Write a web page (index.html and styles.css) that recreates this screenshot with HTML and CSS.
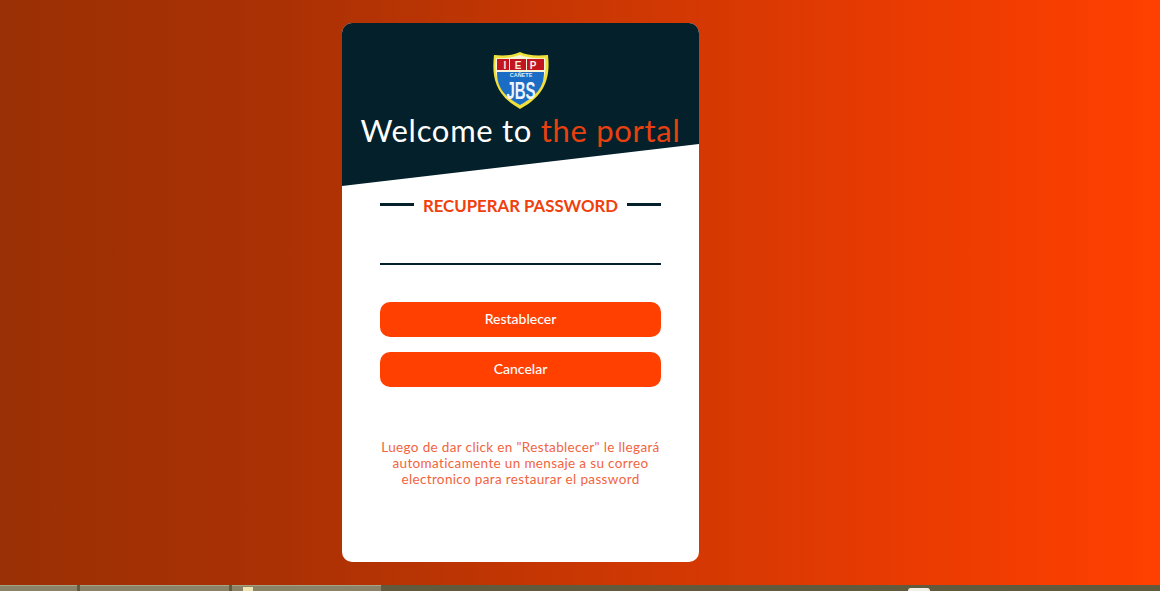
FILE: index.html
```html
<!DOCTYPE html>
<html lang="en">
<head>
  <meta charset="UTF-8" />
  <title>Recuperar Password</title>
  <link rel="stylesheet" href="styles.css">
</head>
<body>
  <main class="page">
    <section class="card">
      <header class="card-head">
        <svg class="logo" viewBox="0 0 56 58" width="56" height="58">
          <path d="M27 0 C33 3 42 4 55 3 C57 22 55 42 27 57 C0 42 -1 22 1 3 C13 4 21 3 27 0 Z" fill="#f2e03a"/>
          <path d="M27 3 C33 5 42 7 52 6 C54 22 51 40 27 53 C4 40 1 22 3 6 C13 7 21 5 27 3 Z" fill="#f7f4d8"/>
          <rect x="4" y="7" width="12" height="11" fill="#c2151f"/>
          <rect x="17" y="7" width="16" height="11" fill="#c2151f"/>
          <rect x="34" y="7" width="17" height="11" fill="#c2151f"/>
          <path d="M4 20 H51 C51 34 45 43 27 53 C9 43 4 34 4 20 Z" fill="#1a6cc4"/>
          <text class="logo-iep" x="27" y="16.500" textLength="33">IEP</text>
          <text class="logo-town" x="28" y="25">CAÑETE</text>
          <text class="logo-jbs" transform="translate(28 47) scale(1 1.55)">JBS</text>
        </svg>
        <h1 class="welcome">Welcome to <span class="accent">the portal</span></h1>
      </header>

      <form class="reset-form">
        <div class="form-title">
          <span class="rule"></span>
          <h2>RECUPERAR PASSWORD</h2>
          <span class="rule"></span>
        </div>
        <input class="email" type="text">
        <button type="button" class="btn first">Restablecer</button>
        <button type="button" class="btn">Cancelar</button>
        <p class="note">Luego de dar click en "Restablecer" le llegará automaticamente un mensaje a su correo electronico para restaurar el password</p>
      </form>
    </section>
  </main>

  <footer class="taskbar">
    <div class="task task-one"></div>
    <div class="task task-two"></div>
    <div class="task task-three"><span class="folder"></span></div>
    <span class="tray-icon"></span>
  </footer>
</body>
</html>
```

FILE: styles.css
```css
* {
  box-sizing: border-box;
}
html, body {
  height: 100%;
}
body {
  margin: 0;
  font-family: Lato, "Noto Sans", sans-serif;
  overflow: hidden;
  display: flex;
  flex-direction: column;
  background: #625a3c;
}
.page {
  height: 585px;
  padding: 23px 119px 0 0;
  display: flex;
  justify-content: center;
  align-items: flex-start;
  background: linear-gradient(to right, #9a3005 0%, #ab3104 25%, #c93703 50%, #e63a02 75%, #ff4000 100%);
}
.card {
  width: 357px;
  height: 539px;
  background: white;
  border-radius: 10px;
  overflow: hidden;
}
.card-head {
  height: 163px;
  padding-top: 29px;
  background: #03202b;
  color: white;
  text-align: center;
  clip-path: polygon(0 0, 100% 0, 100% 121px, 0 100%);
}
.logo {
  display: block;
  margin: 0 auto;
}
.logo text {
  font-family: "Liberation Sans", sans-serif;
  text-anchor: middle;
  font-weight: bold;
}
.logo-iep {
  font-size: 10px;
  fill: #f4efe0;
}
.logo-town {
  font-size: 5.500px;
  font-weight: normal;
  fill: #dfe9f5;
}
.logo-jbs {
  font-size: 15px;
  fill: #eef4fb;
}
.welcome {
  margin: 1px 0 0;
  font-size: 31px;
  font-weight: 400;
  letter-spacing: 0.7px;
  line-height: 38px;
  white-space: nowrap;
}
.accent {
  color: #e8410f;
}
.reset-form {
  padding: 0 38px;
}
.form-title {
  margin-top: 9px;
  height: 20px;
  display: flex;
  align-items: center;
  justify-content: space-between;
}
.form-title h2 {
  margin: 0;
  font-size: 16.800px;
  font-weight: 700;
  color: #f0400c;
  white-space: nowrap;
}
.rule {
  width: 34px;
  height: 3px;
  margin-top: -2px;
  background: #03202b;
}
.email {
  display: block;
  width: 100%;
  height: 40px;
  margin-top: 10px;
  border: none;
  border-bottom: 2px solid #03202b;
  outline: none;
}
.btn {
  display: block;
  width: 100%;
  height: 35px;
  margin-top: 15px;
  border: none;
  border-radius: 10px;
  background: #ff4000;
  color: white;
  font-family: inherit;
  font-size: 14px;
  font-weight: 500;
  padding-bottom: 3px;
}
.btn.first {
  margin-top: 37px;
}
.note {
  margin: 52px -4px 0;
  font-size: 13.500px;
  letter-spacing: 0.35px;
  line-height: 16px;
  text-align: center;
  color: #f2643e;
}
.taskbar {
  flex: 1;
  display: flex;
  gap: 3px;
  position: relative;
}
.task {
  height: 100%;
  background: #8a8368;
  border-top: 1px solid #a8a287;
}
.task-one {
  width: 77px;
}
.task-two {
  width: 149px;
}
.task-three {
  width: 149px;
  padding-left: 11px;
}
.folder {
  display: block;
  width: 10px;
  height: 4px;
  margin-top: 1px;
  background: #f0e6b4;
}
.tray-icon {
  position: absolute;
  left: 908px;
  top: 3px;
  width: 22px;
  height: 3px;
  background: #f2f0e6;
  border-radius: 4px 4px 0 0;
}
```
